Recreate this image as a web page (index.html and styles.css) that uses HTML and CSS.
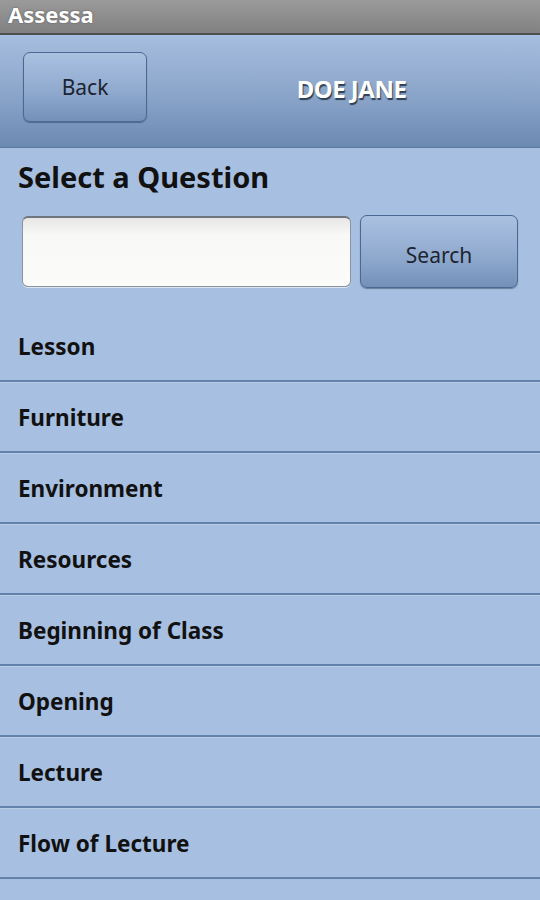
FILE: index.html
```html
<!DOCTYPE html>
<html>

<head>
    <title>Assessa</title>
    <meta charset="utf-8">
    <link rel="stylesheet" href="styles.css">
</head>

<body>
    <div class="titlebar">Assessa</div>

    <div class="header">
        <button class="btn back">Back</button>
        <div class="student">DOE JANE</div>
    </div>

    <div class="content">
        <h1 class="heading">Select a Question</h1>

        <div class="search">
            <input class="search-input" type="text">
            <button class="btn search-btn">Search</button>
        </div>

        <ul class="questions">
            <li>Lesson</li>
            <li>Furniture</li>
            <li>Environment</li>
            <li>Resources</li>
            <li>Beginning of Class</li>
            <li>Opening</li>
            <li>Lecture</li>
            <li>Flow of Lecture</li>
        </ul>
    </div>
</body>

</html>
```

FILE: styles.css
```css
body {
    margin: 0;
    background-color: #a7bfe0;
    font-family: "Noto Sans", "Open Sans", "DejaVu Sans", sans-serif;
    overflow: hidden;
}

.titlebar {
    height: 35px;
    line-height: 26px;
    padding: 1px 0 0 8px;
    box-sizing: border-box;
    background: linear-gradient(#9a9a9a, #818181);
    border-bottom: 2px solid #4f4f4f;
    color: #fff;
    font-size: 22px;
    font-weight: bold;
    text-shadow: 0 0 2px #555;
}

.header {
    display: flex;
    align-items: flex-start;
    height: 113px;
    padding: 17px 0 0 23px;
    box-sizing: border-box;
    background: linear-gradient(#a6bedf, #8aa4c9 55%, #6c89b2);
    border-bottom: 1px solid #5d7aa3;
}

.btn {
    border: 1.5px solid #4a6890;
    border-radius: 7px;
    background: linear-gradient(#aac1e1, #8ea8cd 60%, #7490b8);
    color: #1c2430;
    font-family: inherit;
    font-size: 21px;
    box-shadow: 0 1px 1px rgba(40, 60, 90, 0.5);
    padding: 0;
}

.back {
    width: 124px;
    height: 70px;
    padding-bottom: 1px;
}

.student {
    flex: 1;
    text-align: center;
    padding: 0 0 0 16px;
    line-height: 74px;
    color: #fff;
    font-size: 24px;
    font-weight: bold;
    letter-spacing: -0.5px;
    text-shadow: 1px 2px 1px #2d3e55;
}

.heading {
    margin: 0;
    padding: 10px 0 0 18px;
    font-size: 29px;
    line-height: 38px;
    color: #111;
}

.search {
    display: flex;
    align-items: flex-start;
    gap: 9px;
    padding: 19px 0 0 22px;
}

.search-input {
    width: 329px;
    height: 71px;
    box-sizing: border-box;
    margin-top: 1px;
    border: 1px solid #8b949c;
    border-top: 2px solid #6f757c;
    border-radius: 6px;
    background: linear-gradient(#e6e6e4, #f8f8f6 25%, #fbfbf9);
    box-shadow: 0 1px 0 #dbe6f3;
}

.search-btn {
    width: 158px;
    height: 73px;
    padding-top: 7px;
}

.questions {
    list-style: none;
    margin: 23px 0 0 0;
    padding: 0;
}

.questions li {
    height: 69px;
    line-height: 72px;
    padding-left: 18px;
    font-size: 22.5px;
    font-weight: bold;
    color: #111;
    border-bottom: 2px solid #6382ab;
    box-shadow: 0 1px 0 #b9cde8;
}
```
